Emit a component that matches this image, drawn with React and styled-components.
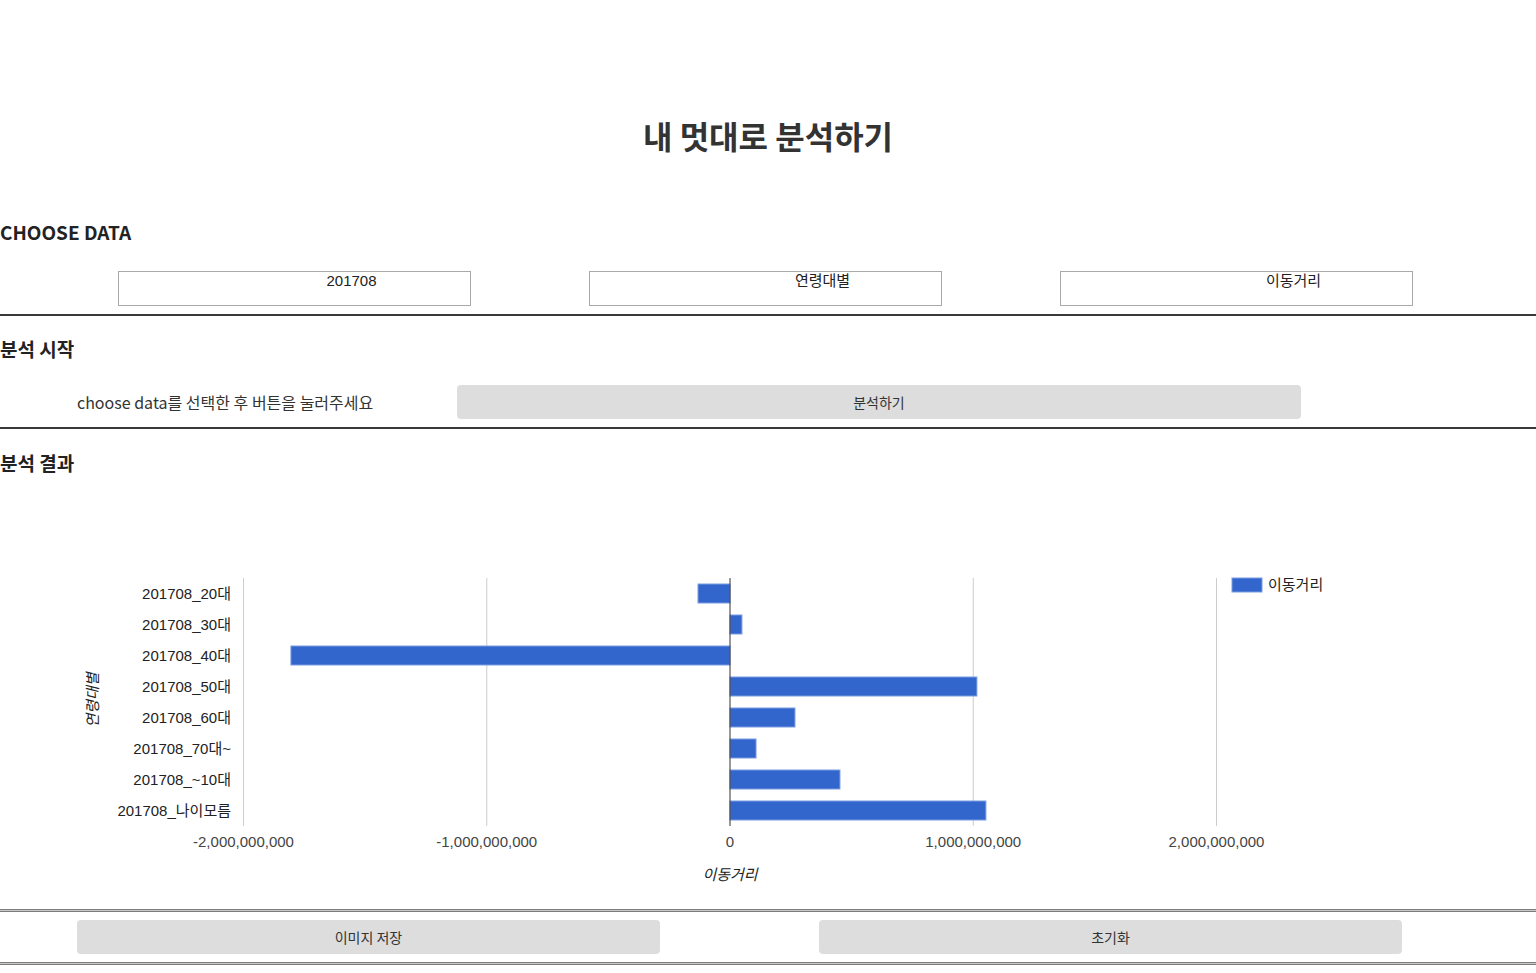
import React from "react";
import styled, { createGlobalStyle } from "styled-components";

const GlobalStyle = createGlobalStyle`
  body {
    margin: 0;
    background: #fff;
    color: #333;
    font-family: "Noto Sans CJK KR", "Noto Sans", sans-serif;
  }
`;

const rows = [
  { label: "201708_20대", value: -131500000 },
  { label: "201708_30대", value: 49000000 },
  { label: "201708_40대", value: -1805000000 },
  { label: "201708_50대", value: 1015000000 },
  { label: "201708_60대", value: 267000000 },
  { label: "201708_70대~", value: 107000000 },
  { label: "201708_~10대", value: 452000000 },
  { label: "201708_나이모름", value: 1052000000 },
];

const ticks = [-2000000000, -1000000000, 0, 1000000000, 2000000000];

const ZERO_X = 730;
const PX_PER_UNIT = 243.25 / 1000000000;
const PLOT_TOP = 99;
const ROW_H = 31;
const PLOT_BOTTOM = PLOT_TOP + ROW_H * rows.length;
const FONT = "Liberation Sans, Noto Sans CJK KR, sans-serif";

const Page = styled.div`
  width: 1536px;
`;

const Title = styled.h1`
  margin: 0;
  padding-top: 113px;
  height: 87px;
  text-align: center;
  font-size: 32px;
  font-weight: 700;
  line-height: 44px;
  color: #333;
`;

const SectionTitle = styled.h2`
  margin: 0;
  font-size: 19px;
  font-weight: 700;
  line-height: 28px;
  color: #222;
  padding-top: ${(p) => p.$top || 0}px;
`;

const SelectRow = styled.div`
  display: flex;
  gap: 118px;
  padding: 25px 0 8px 118px;
`;

const SelectBox = styled.div`
  box-sizing: border-box;
  width: 353px;
  height: 35px;
  border: 1px solid #a9a9a9;
  padding: 0 0 0 114px;
  text-align: center;
  font-family: "Liberation Sans", "Noto Sans CJK KR", sans-serif;
  font-size: 15px;
  line-height: 18px;
  color: #222;
`;

const Rule = styled.hr`
  margin: 0;
  border: 0;
  height: 2px;
  background: #3a3a3a;
`;

const SoftRule = styled.hr`
  margin: 0;
  border: 0;
  border-top: 1px solid #7d7d7d;
  border-bottom: 1px solid #7d7d7d;
  height: 1px;
  background: #c9c9c9;
`;

const StartRow = styled.div`
  display: flex;
  align-items: center;
  padding: 22px 0 8px 77px;
`;

const Hint = styled.p`
  margin: 0;
  width: 380px;
  font-size: 16px;
  color: #333;
`;

const GrayButton = styled.button`
  box-sizing: border-box;
  width: ${(p) => p.$width}px;
  height: 34px;
  border: 0;
  border-radius: 4px;
  background: #dddddd;
  color: #333;
  font-family: "Noto Sans CJK KR", sans-serif;
  font-size: 14px;
  line-height: 20px;
  padding: 0;
`;

const ChartWrap = styled.div`
  margin-top: 2px;
  height: 430px;
`;

const BottomRow = styled.div`
  display: flex;
  gap: 159px;
  padding: 8px 0 8px 77px;
`;

const Chart = () => (
  <svg width="1536" height="430" viewBox="0 0 1536 430">
    {ticks.map((t) => {
      const x = ZERO_X + t * PX_PER_UNIT;
      return (
        <g key={t}>
          {t !== 0 && (
            <line x1={x} x2={x} y1={PLOT_TOP} y2={PLOT_BOTTOM} stroke="#cccccc" strokeWidth="1" />
          )}
          <text x={x} y={368} textAnchor="middle" fontFamily={FONT} fontSize="15" fill="#444">
            {t.toLocaleString("en-US")}
          </text>
        </g>
      );
    })}
    {rows.map((r, i) => {
      const cy = PLOT_TOP + ROW_H * i + ROW_H / 2;
      const w = Math.abs(r.value) * PX_PER_UNIT;
      const x = r.value < 0 ? ZERO_X - w : ZERO_X;
      return (
        <g key={r.label}>
          <rect x={x} y={cy - 9.5} width={w} height={19} fill="#3366cc" stroke="#7b9be0" strokeWidth="1" />
          <text x={231} y={cy + 5} textAnchor="end" fontFamily={FONT} fontSize="15" fill="#222">
            {r.label}
          </text>
        </g>
      );
    })}
    <line x1={ZERO_X} x2={ZERO_X} y1={PLOT_TOP} y2={PLOT_BOTTOM} stroke="#333" strokeWidth="1" />
    <text x={ZERO_X} y={401} textAnchor="middle" fontFamily={FONT} fontSize="15" fontStyle="italic" fill="#222">
      이동거리
    </text>
    <text
      transform="translate(98 221) rotate(-90)"
      textAnchor="middle"
      fontFamily={FONT}
      fontSize="15"
      fontStyle="italic"
      fill="#222"
    >
      연령대별
    </text>
    <rect x={1232} y={99} width={30} height={14} fill="#3366cc" stroke="#7b9be0" strokeWidth="1" />
    <text x={1268} y={111} fontFamily={FONT} fontSize="15" fill="#222">
      이동거리
    </text>
  </svg>
);

export default function App() {
  return (
    <Page>
      <GlobalStyle />
      <Title>내 멋대로 분석하기</Title>
      <SectionTitle $top={18}>CHOOSE DATA</SectionTitle>
      <SelectRow>
        <SelectBox>201708</SelectBox>
        <SelectBox>연령대별</SelectBox>
        <SelectBox>이동거리</SelectBox>
      </SelectRow>
      <Rule />
      <SectionTitle $top={19}>분석 시작</SectionTitle>
      <StartRow>
        <Hint>choose data를 선택한 후 버튼을 눌러주세요</Hint>
        <GrayButton $width={844}>분석하기</GrayButton>
      </StartRow>
      <Rule />
      <SectionTitle $top={20}>분석 결과</SectionTitle>
      <ChartWrap>
        <Chart />
      </ChartWrap>
      <SoftRule />
      <BottomRow>
        <GrayButton $width={583}>이미지 저장</GrayButton>
        <GrayButton $width={583}>초기화</GrayButton>
      </BottomRow>
      <SoftRule />
    </Page>
  );
}
